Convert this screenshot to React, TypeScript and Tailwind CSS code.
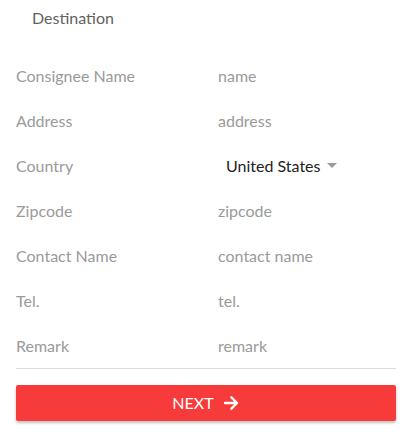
const rows: { label: string; value: string }[] = [
  { label: "Consignee Name", value: "name" },
  { label: "Address", value: "address" },
  { label: "Country", value: "" },
  { label: "Zipcode", value: "zipcode" },
  { label: "Contact Name", value: "contact name" },
  { label: "Tel.", value: "tel." },
  { label: "Remark", value: "remark" },
];

export default function App() {
  return (
    <div className="w-[412px] h-[433px] bg-white font-['Lato','Liberation_Sans',sans-serif] text-[16px]">
      <div className="h-[36px] flex items-center pl-[32px] text-[#616161]">Destination</div>
      <div className="mt-[17px] mx-[16px] border-b border-[#ddd]">
        {rows.map((r) => (
          <div key={r.label} className="h-[45px] flex items-center">
            <div className="w-[202px] text-[#9a9a9a]">{r.label}</div>
            {r.value ? (
              <div className="text-[#9a9a9a]">{r.value}</div>
            ) : (
              <div className="flex items-center pl-[8px] text-[#222]">
                United States
                <span className="ml-[7px] w-0 h-0 border-l-[5px] border-r-[5px] border-t-[5px] border-l-transparent border-r-transparent border-t-[#999]" />
              </div>
            )}
          </div>
        ))}
      </div>
      <button className="mt-[16px] mx-[16px] w-[380px] h-[36px] rounded-[2px] bg-[#f73a3a] text-white flex items-center justify-center gap-[8px] shadow-[0_2px_3px_rgba(0,0,0,0.25)]">
        <span>NEXT</span>
        <svg width="18" height="18" viewBox="0 0 24 24" fill="none" stroke="white" strokeWidth="3.2" strokeLinecap="round" strokeLinejoin="round">
          <path d="M4 12h15M12.5 4.5l7.5 7.5-7.5 7.5" />
        </svg>
      </button>
    </div>
  );
}
